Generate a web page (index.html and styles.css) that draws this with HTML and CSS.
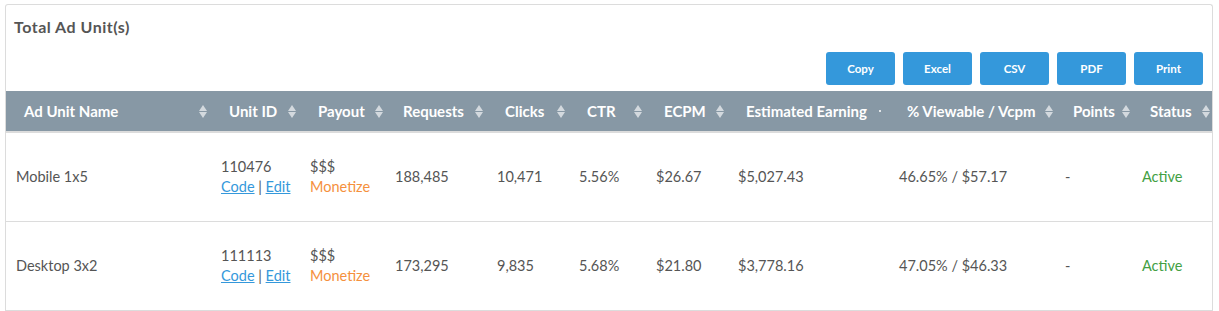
FILE: index.html
```html
<!DOCTYPE html>
<html>
<head>
<meta charset="utf-8">
<link rel="stylesheet" href="styles.css">
</head>
<body>
<div class="card">
  <div class="title">Total Ad Unit(s)</div>
  <div class="toolbar">
    <button class="btn">Copy</button>
    <button class="btn">Excel</button>
    <button class="btn">CSV</button>
    <button class="btn">PDF</button>
    <button class="btn">Print</button>
  </div>
  <table class="grid">
    <colgroup>
      <col style="width:205px"><col style="width:89px"><col style="width:85px"><col style="width:102px"><col style="width:82px"><col style="width:77px"><col style="width:82px"><col style="width:161px"><col style="width:166px"><col style="width:77px"><col style="width:80px">
    </colgroup>
    <thead>
      <tr>
        <th><span class="th">Ad Unit Name<i class="sort"></i></span></th>
        <th><span class="th">Unit ID<i class="sort"></i></span></th>
        <th class="tight"><span class="th">Payout<i class="sort"></i></span></th>
        <th><span class="th">Requests<i class="sort"></i></span></th>
        <th><span class="th">Clicks<i class="sort"></i></span></th>
        <th><span class="th">CTR<i class="sort"></i></span></th>
        <th><span class="th">ECPM<i class="sort"></i></span></th>
        <th><span class="th">Estimated Earning<i class="dot"></i></span></th>
        <th class="tight"><span class="th">% Viewable / Vcpm<i class="sort"></i></span></th>
        <th class="tight"><span class="th">Points<i class="sort"></i></span></th>
        <th class="tight"><span class="th">Status<i class="sort"></i></span></th>
      </tr>
    </thead>
    <tbody>
      <tr>
        <td>Mobile 1x5</td>
        <td><div>110476</div><div><a href="#">Code</a> | <a href="#">Edit</a></div></td>
        <td><div>$$$</div><div class="mon">Monetize</div></td>
        <td>188,485</td>
        <td>10,471</td>
        <td>5.56%</td>
        <td>$26.67</td>
        <td>$5,027.43</td>
        <td>46.65% / $57.17</td>
        <td>-</td>
        <td class="active">Active</td>
      </tr>
      <tr>
        <td>Desktop 3x2</td>
        <td><div>111113</div><div><a href="#">Code</a> | <a href="#">Edit</a></div></td>
        <td><div>$$$</div><div class="mon">Monetize</div></td>
        <td>173,295</td>
        <td>9,835</td>
        <td>5.68%</td>
        <td>$21.80</td>
        <td>$3,778.16</td>
        <td>47.05% / $46.33</td>
        <td>-</td>
        <td class="active">Active</td>
      </tr>
    </tbody>
  </table>
</div>
</body>
</html>
```

FILE: styles.css
```css
html, body { margin: 0; padding: 0; background: #fff; }
body { padding: 4px 6px 0 5px; font-family: Lato, "Liberation Sans", sans-serif; color: #555; }
.card {
  border: 1px solid #dcdcdc;
  border-bottom: none;
  border-radius: 3px 3px 0 0;
  height: 307px;
  box-sizing: border-box;
  overflow: hidden;
}
.title {
  font-weight: 700;
  font-size: 16px;
  letter-spacing: 0.5px;
  color: #555;
  padding: 12px 0 0 8px;
  height: 34px;
  box-sizing: border-box;
}
.toolbar {
  display: flex;
  justify-content: flex-end;
  gap: 8px;
  padding: 13px 9px 0 0;
  height: 52px;
  box-sizing: border-box;
}
.btn {
  width: 69px;
  height: 33px;
  background: #3498db;
  border: none;
  border-radius: 3px;
  color: #fff;
  font-family: Lato, sans-serif;
  font-weight: 700;
  font-size: 11.5px;
  padding: 0;
}
.grid {
  border-collapse: collapse;
  table-layout: fixed;
  width: 1206px;
  margin-top: 0;
}
.grid th {
  background: #8798a5;
  color: #fff;
  font-weight: 700;
  font-size: 15px;
  text-align: left;
  height: 40px;
  padding: 0 4px 0 18px;
  border-bottom: 2px solid #dcdcdc;
  white-space: nowrap;
}
.grid th.tight { padding-left: 18px; padding-right: 2px; }
.th { display: flex; align-items: center; justify-content: space-between; }
.sort {
  display: inline-block;
  width: 8px;
  height: 13px;
  position: relative;
  flex: none;
}
.sort::before, .sort::after {
  content: "";
  position: absolute;
  left: 0;
  border-left: 4px solid transparent;
  border-right: 4px solid transparent;
}
.sort::before { top: 0; border-bottom: 6px solid #d3d9de; }
.sort::after { bottom: 0; border-top: 6px solid #d3d9de; }
.dot { display: inline-block; width: 2px; height: 2px; background: #fff; border-radius: 1px; margin-right: 4px; flex: none; }
.grid td {
  font-size: 14.5px;
  color: #555;
  padding: 0 4px 0 10px;
  height: 88px;
  border-bottom: 1px solid #dcdcdc;
  line-height: 20px;
  white-space: nowrap;
}
.grid tbody tr:first-child td { height: 88px; }
.grid td div { line-height: 20px; }
.grid a { color: #3498db; text-decoration: underline; }
.mon { color: #f5903d; }
.grid td.active { color: #43a043; }
```
